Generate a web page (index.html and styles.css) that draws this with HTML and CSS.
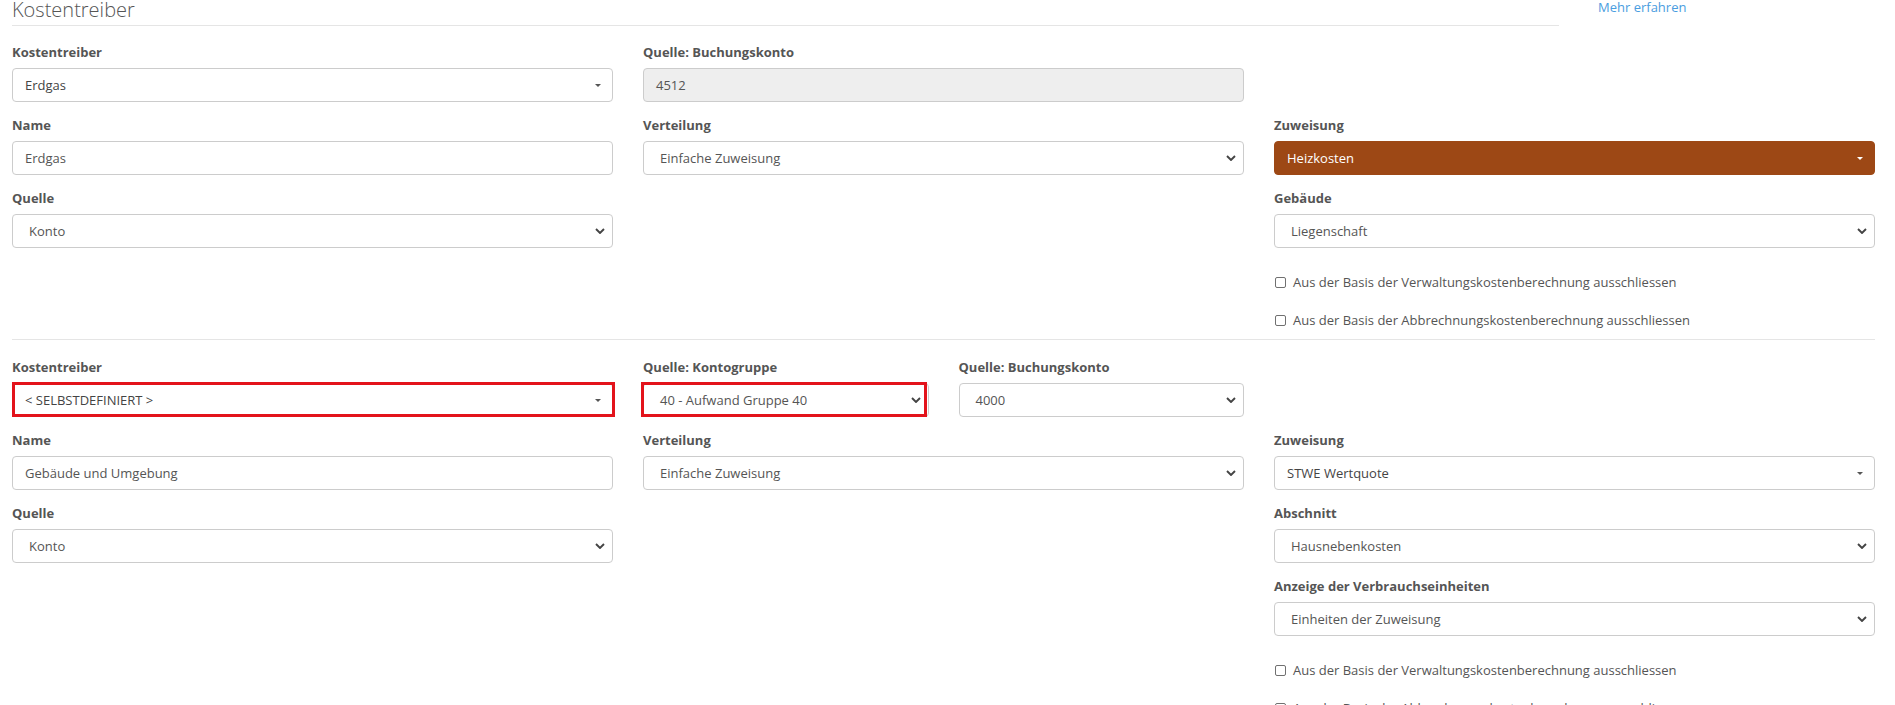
FILE: index.html
```html
<!DOCTYPE html>
<html lang="de">
<head>
  <meta charset="UTF-8" />
  <meta name="viewport" content="width=device-width, initial-scale=1.0"/>
  <title>Kostentreiber</title>
  <link rel="stylesheet" href="styles.css">
</head>
<body>
  <div class="page">
    <div class="head">
      <h3 class="title">Kostentreiber</h3>
      <a class="more" href="#">Mehr erfahren</a>
    </div>

    <!-- Kostentreiber aus Vorlage -->
    <div class="driver">
      <div class="row">
        <div class="group">
          <label>Kostentreiber</label>
          <div class="field picker"><span>Erdgas</span><i class="caret"></i></div>
        </div>
        <div class="group">
          <label>Quelle: Buchungskonto</label>
          <div class="field disabled">4512</div>
        </div>
      </div>
      <div class="row">
        <div class="col">
          <div class="group">
            <label>Name</label>
            <div class="field">Erdgas</div>
          </div>
          <div class="group">
            <label>Quelle</label>
            <div class="field select"><span>Konto</span><svg class="chev" width="10" height="6" viewBox="0 0 10 6"><path d="M1 1l4 4 4-4"/></svg></div>
          </div>
        </div>
        <div class="col">
          <div class="group">
            <label>Verteilung</label>
            <div class="field select"><span>Einfache Zuweisung</span><svg class="chev" width="10" height="6" viewBox="0 0 10 6"><path d="M1 1l4 4 4-4"/></svg></div>
          </div>
        </div>
        <div class="col">
          <div class="group">
            <label>Zuweisung</label>
            <div class="field picker heat"><span>Heizkosten</span><i class="caret"></i></div>
          </div>
          <div class="group">
            <label>Gebäude</label>
            <div class="field select"><span>Liegenschaft</span><svg class="chev" width="10" height="6" viewBox="0 0 10 6"><path d="M1 1l4 4 4-4"/></svg></div>
          </div>
          <div class="check"><i class="box"></i>Aus der Basis der Verwaltungskostenberechnung ausschliessen</div>
          <div class="check"><i class="box"></i>Aus der Basis der Abbrechnungskostenberechnung ausschliessen</div>
        </div>
      </div>
    </div>

    <!-- selbstdefinierter Kostentreiber -->
    <div class="driver">
      <div class="row">
        <div class="group">
          <label>Kostentreiber</label>
          <div class="field picker marked"><span>&lt; SELBSTDEFINIERT &gt;</span><i class="caret"></i></div>
        </div>
        <div class="split">
          <div class="group">
            <label>Quelle: Kontogruppe</label>
            <div class="field select marked shift"><span>40 - Aufwand Gruppe 40</span><svg class="chev" width="10" height="6" viewBox="0 0 10 6"><path d="M1 1l4 4 4-4"/></svg></div>
          </div>
          <div class="group">
            <label>Quelle: Buchungskonto</label>
            <div class="field select"><span>4000</span><svg class="chev" width="10" height="6" viewBox="0 0 10 6"><path d="M1 1l4 4 4-4"/></svg></div>
          </div>
        </div>
      </div>
      <div class="row">
        <div class="col">
          <div class="group">
            <label>Name</label>
            <div class="field">Gebäude und Umgebung</div>
          </div>
          <div class="group">
            <label>Quelle</label>
            <div class="field select"><span>Konto</span><svg class="chev" width="10" height="6" viewBox="0 0 10 6"><path d="M1 1l4 4 4-4"/></svg></div>
          </div>
        </div>
        <div class="col">
          <div class="group">
            <label>Verteilung</label>
            <div class="field select"><span>Einfache Zuweisung</span><svg class="chev" width="10" height="6" viewBox="0 0 10 6"><path d="M1 1l4 4 4-4"/></svg></div>
          </div>
        </div>
        <div class="col">
          <div class="group">
            <label>Zuweisung</label>
            <div class="field picker"><span>STWE Wertquote</span><i class="caret"></i></div>
          </div>
          <div class="group">
            <label>Abschnitt</label>
            <div class="field select"><span>Hausnebenkosten</span><svg class="chev" width="10" height="6" viewBox="0 0 10 6"><path d="M1 1l4 4 4-4"/></svg></div>
          </div>
          <div class="group">
            <label>Anzeige der Verbrauchseinheiten</label>
            <div class="field select"><span>Einheiten der Zuweisung</span><svg class="chev" width="10" height="6" viewBox="0 0 10 6"><path d="M1 1l4 4 4-4"/></svg></div>
          </div>
          <div class="check"><i class="box"></i>Aus der Basis der Verwaltungskostenberechnung ausschliessen</div>
          <div class="check"><i class="box"></i>Aus der Basis der Abbrechnungskostenberechnung ausschliessen</div>
        </div>
      </div>
    </div>
  </div>
</body>
</html>
```

FILE: styles.css
```css
* { box-sizing: border-box; }
body {
  margin: 0;
  background: #fff;
  color: #555;
  font-family: 'Open Sans', 'Liberation Sans', sans-serif;
  font-size: 13px;
  overflow: hidden;
}
.page {
  padding: 0 20px 0 12px;
}
.head {
  display: flex;
  align-items: flex-start;
  margin-bottom: 17px;
}
.title {
  flex: none;
  width: 1547px;
  margin: 0;
  padding: 0 0 5px;
  font-size: 20px;
  font-weight: 300;
  line-height: 20px;
  color: #555;
  border-bottom: 1px solid #e5e5e5;
}
.more {
  margin-left: 39px;
  font-size: 13px;
  line-height: 14px;
  color: #4a9de0;
  text-decoration: none;
}
.driver + .driver {
  border-top: 1px solid #e5e5e5;
  padding-top: 18px;
}
.row {
  display: grid;
  grid-template-columns: repeat(3, 1fr);
  column-gap: 30px;
}
.split {
  display: grid;
  grid-template-columns: 1fr 1fr;
  column-gap: 30px;
}
.group {
  margin-bottom: 14px;
}
label {
  display: block;
  margin-bottom: 7px;
  font-size: 13px;
  font-weight: 700;
  line-height: 18px;
  color: #555;
}
.field {
  display: flex;
  align-items: center;
  height: 34px;
  padding: 0 12px;
  border: 1px solid #ccc;
  border-radius: 4px;
  background: #fff;
  color: #555;
  font-size: 13px;
}
.disabled {
  background: #eee;
}
.picker {
  justify-content: space-between;
  padding-right: 11px;
  color: #444;
}
.select {
  justify-content: space-between;
  padding: 0 7px 0 16px;
}
.chev {
  fill: none;
  stroke: #444;
  stroke-width: 1.9;
}
.caret {
  width: 0;
  height: 0;
  border-top: 3px solid #555;
  border-left: 3px solid transparent;
  border-right: 3px solid transparent;
}
.heat {
  background: #9d4815;
  border-color: #9d4815;
  color: #fff;
}
.heat .caret {
  border-top-color: #fff;
}
/* rote Markierung */
.marked {
  position: relative;
}
.marked::after {
  content: "";
  position: absolute;
  top: -2px;
  left: -1px;
  right: -3px;
  bottom: -1px;
  border: 3px solid #e3131b;
}
.marked.shift::after {
  left: -3px;
  right: 1px;
}
.check {
  display: flex;
  align-items: center;
  height: 20px;
  margin: 0 0 18px;
  font-size: 13px;
  color: #555;
}
.group + .check {
  margin-top: 24px;
}
.check:last-child {
  margin-bottom: 9px;
}
.box {
  width: 11px;
  height: 11px;
  margin: 0 7px 0 1px;
  border: 1px solid #707070;
  border-radius: 2px;
}
```
